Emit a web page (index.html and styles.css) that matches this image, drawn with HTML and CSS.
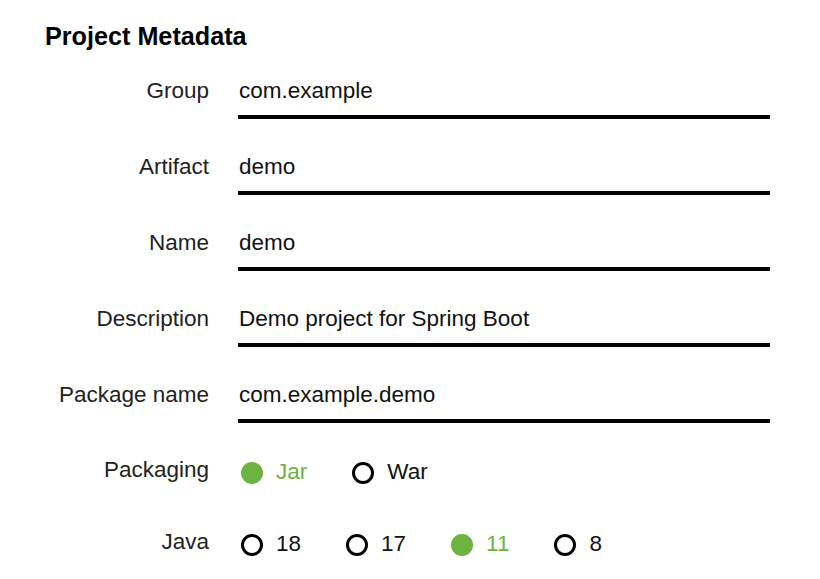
FILE: index.html
```html
<!DOCTYPE html>
<html>
<head>
<meta charset="utf-8">
<link rel="stylesheet" href="styles.css">
</head>
<body>
<div class="panel">
  <h2 class="title">Project Metadata</h2>
  <div class="fields">
    <div class="row">
      <label class="label">Group</label>
      <div class="input">com.example</div>
    </div>
    <div class="row">
      <label class="label">Artifact</label>
      <div class="input">demo</div>
    </div>
    <div class="row">
      <label class="label">Name</label>
      <div class="input">demo</div>
    </div>
    <div class="row">
      <label class="label">Description</label>
      <div class="input">Demo project for Spring Boot</div>
    </div>
    <div class="row">
      <label class="label">Package name</label>
      <div class="input">com.example.demo</div>
    </div>
    <div class="row radio-row">
      <label class="label">Packaging</label>
      <div class="radios">
        <span class="radio checked"><span class="dot"></span>Jar</span>
        <span class="radio"><span class="dot"></span>War</span>
      </div>
    </div>
    <div class="row radio-row java">
      <label class="label">Java</label>
      <div class="radios">
        <span class="radio"><span class="dot"></span>18</span>
        <span class="radio"><span class="dot"></span>17</span>
        <span class="radio checked"><span class="dot"></span>11</span>
        <span class="radio"><span class="dot"></span>8</span>
      </div>
    </div>
  </div>
</div>
</body>
</html>
```

FILE: styles.css
```css
html, body {
  margin: 0;
  padding: 0;
  background: #fff;
}
body {
  font-family: "Liberation Sans", Arial, sans-serif;
  color: #000;
}
.panel {
  padding: 21px 0 0 45px;
  width: 725px;
}
.title {
  margin: 0;
  font-size: 25.2px;
  line-height: 30px;
  font-weight: bold;
  color: #000;
}
.fields {
  display: flex;
  flex-direction: column;
  gap: 32.5px;
  margin-top: 24.5px;
}
.row {
  display: flex;
  align-items: flex-start;
  font-size: 22.5px;
  line-height: 30px;
}
.label {
  width: 164px;
  flex: none;
  text-align: right;
  color: #222;
  margin-right: 29px;
}
.input {
  width: 532px;
  padding: 0 0 9.5px 1px;
  border-bottom: 4px solid #000;
  color: #111;
}
.radio-row {
  margin-top: -0.5px;
}
.radio-row.java {
  margin-top: 7.5px;
}
.radios {
  display: flex;
  align-items: center;
  padding-left: 3px;
  margin-top: 2px;
}
.radio {
  display: flex;
  align-items: center;
  margin-right: 45px;
  color: #111;
}
.dot {
  width: 22px;
  height: 22px;
  box-sizing: border-box;
  border: 3px solid #000;
  border-radius: 50%;
  margin-right: 13px;
  flex: none;
  position: relative;
  top: 0.5px;
}
.radio.checked {
  color: #6db33f;
}
.radio.checked .dot {
  border-color: #6db33f;
  background: #6db33f;
}
```
